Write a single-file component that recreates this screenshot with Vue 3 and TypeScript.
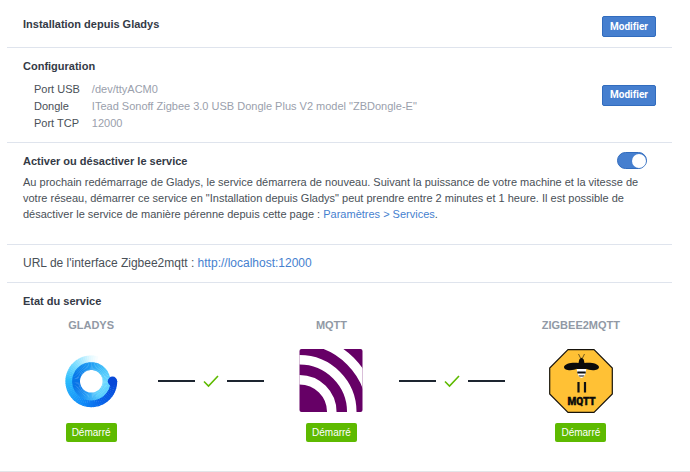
<script setup lang="ts">
import { ref } from 'vue'

interface Setting {
  label: string
  value: string
}

interface Segment {
  d: string
  color: string
}

type Rgb = [number, number, number]
type Stop = [number, Rgb]

const settings: Setting[] = [
  { label: 'Port USB', value: '/dev/ttyACM0' },
  { label: 'Dongle', value: 'ITead Sonoff Zigbee 3.0 USB Dongle Plus V2 model "ZBDongle-E"' },
  { label: 'Port TCP', value: '12000' },
]

const enabled = ref<boolean>(true)

// Splits a ring into short arcs so its colour can follow the angle.
function sweep(radius: number, stops: Stop[]): Segment[] {
  const center = 32.3
  const step = 5
  const last = stops[stops.length - 1][0]
  const point = (deg: number): string => {
    const a = (deg * Math.PI) / 180
    return `${(center + radius * Math.cos(a)).toFixed(2)} ${(center + radius * Math.sin(a)).toFixed(2)}`
  }
  const segments: Segment[] = []
  for (let a = stops[0][0]; a < last; a += step) {
    const i = Math.max(1, stops.findIndex(([s]) => s > a))
    const [a0, c0] = stops[i - 1]
    const [a1, c1] = stops[i]
    const t = (a - a0) / (a1 - a0)
    const rgb = c0.map((v, k) => Math.round(v + (c1[k] - v) * t))
    segments.push({ d: `M${point(a)}A${radius} ${radius} 0 0 1 ${point(a + step + 1)}`, color: `rgb(${rgb.join(',')})` })
  }
  return segments
}

const outerRing = sweep(21.2, [
  [0, [8, 72, 216]],
  [60, [8, 98, 232]],
  [110, [18, 140, 248]],
  [180, [44, 188, 252]],
  [225, [125, 222, 255]],
  [265, [225, 248, 255]],
  [285, [255, 255, 255]],
])

const innerRing = sweep(15.2, [
  [0, [108, 216, 255]],
  [60, [92, 208, 253]],
  [115, [32, 150, 245]],
  [160, [8, 115, 230]],
  [200, [8, 120, 232]],
  [270, [34, 160, 244]],
  [315, [72, 196, 250]],
  [360, [108, 216, 255]],
])
</script>

<template>
  <main class="page">
    <section class="row install">
      <h2>Installation depuis Gladys</h2>
      <button type="button" class="btn">Modifier</button>
    </section>

    <section class="row config">
      <div>
        <h2>Configuration</h2>
        <dl class="settings">
          <template v-for="s in settings" :key="s.label">
            <dt>{{ s.label }}</dt>
            <dd>{{ s.value }}</dd>
          </template>
        </dl>
      </div>
      <button type="button" class="btn">Modifier</button>
    </section>

    <section class="service">
      <div class="service-head">
        <h2><label for="service-toggle">Activer ou désactiver le service</label></h2>
        <input id="service-toggle" v-model="enabled" type="checkbox" role="switch" class="switch" />
      </div>
      <p>
        Au prochain redémarrage de Gladys, le service démarrera de nouveau. Suivant la puissance de votre machine et la
        vitesse de votre réseau, démarrer ce service en "Installation depuis Gladys" peut prendre entre 2 minutes et 1
        heure. Il est possible de désactiver le service de manière pérenne depuis cette page :
        <a href="#services">Paramètres &gt; Services</a>.
      </p>
    </section>

    <section class="url">
      URL de l'interface Zigbee2mqtt : <a href="http://localhost:12000">http://localhost:12000</a>
    </section>

    <section class="state">
      <h2>Etat du service</h2>
      <div class="chain">
        <div class="node">
          <h3>GLADYS</h3>
          <svg class="logo" viewBox="0 0 64 64" aria-hidden="true">
            <g fill="none">
              <path v-for="s in outerRing" :key="s.d" :d="s.d" :stroke="s.color" stroke-width="9.4" />
              <path v-for="s in innerRing" :key="s.d" :d="s.d" :stroke="s.color" stroke-width="7.8" />
            </g>
            <circle cx="53.500" cy="32.300" r="4.700" fill="#0848d8" />
          </svg>
          <span class="badge">Démarré</span>
        </div>

        <div class="link">
          <span class="line"></span>
          <svg class="check" viewBox="0 0 16 16" aria-hidden="true"><path d="M1 8.500 5.500 13 15 3" /></svg>
          <span class="line"></span>
        </div>

        <div class="node">
          <h3>MQTT</h3>
          <svg class="logo" viewBox="0 0 64 64" aria-hidden="true">
            <defs><clipPath id="m-clip"><rect x=".5" width="63" height="63" rx="2" /></clipPath></defs>
            <g clip-path="url(#m-clip)">
              <rect width="64" height="64" fill="#660066" />
              <g fill="none" stroke="#fff" stroke-width="9.500">
                <circle cx=".5" cy="63" r="32.300" />
                <circle cx=".5" cy="63" r="52.300" />
                <circle cx=".5" cy="63" r="72" />
              </g>
            </g>
          </svg>
          <span class="badge">Démarré</span>
        </div>

        <div class="link">
          <span class="line"></span>
          <svg class="check" viewBox="0 0 16 16" aria-hidden="true"><path d="M1 8.500 5.500 13 15 3" /></svg>
          <span class="line"></span>
        </div>

        <div class="node">
          <h3>ZIGBEE2MQTT</h3>
          <svg class="logo" viewBox="0 0 64 64" aria-hidden="true">
            <path d="M19 .7H45L63.300 19V45L45 63.300H19L.7 45V19Z" fill="#ffc135" stroke="#17130b" stroke-width="1.200" />
            <path d="M29.500 5l2 4M35.500 5l-2 4" fill="none" stroke="#111" stroke-width=".6" />
            <path d="M30.300 10.500q2.200-3.500 4.400 0l.8 3.500c5-1 14 0 14.500 4 0 4-9 4-13.500 1.500h-8c-4.500 2.500-13.500 2.500-13.500-1.500 .5-4 9.500-5 14.500-4Z" fill="#0b0b0b" />
            <path d="M28 18h9v4.500q-1 5.500-4.500 6.500Q29 28 28 22.500Z" fill="#fff" />
            <path d="M28 17.500h9v2.500h-9zM28.300 22.500h8.400v2h-8.400zM29.500 26.500h6l-1 1h-4z" fill="#0b0b0b" />
            <path d="M29.500 33v10.500M36 33v10.500" stroke="#111" stroke-width="2.200" />
            <text x="32.500" y="56" class="logo-text">MQTT</text>
          </svg>
          <span class="badge">Démarré</span>
        </div>
      </div>
    </section>
  </main>
</template>

<style>
body {
  margin: 0;
  background: #fff;
}
</style>

<style scoped>
.page {
  border-bottom: 1px solid #e3e5e9;
  font: 11px/16px "Liberation Sans", Arial, sans-serif;
  color: #495057;
}

section {
  margin: 0 18px 0 7px;
  padding: 0 16px;
  border-bottom: 1px solid #dfe4ed;
}

section.state {
  border-bottom: 0;
}

h2 {
  margin: 0;
  font-size: 11px;
  line-height: 16px;
  font-weight: 700;
  color: #343a46;
}

a {
  color: #467fcf;
  text-decoration: none;
}

.row {
  display: flex;
  align-items: center;
  justify-content: space-between;
}

.install {
  padding-top: 16px;
  padding-bottom: 10px;
}

.install h2 {
  align-self: flex-start;
}

.config {
  padding-top: 10px;
  padding-bottom: 10px;
}

.btn {
  box-sizing: border-box;
  height: 21px;
  padding: 0 7px;
  border: 1px solid #316cbe;
  border-radius: 2px;
  background: #467fcf;
  color: #fff;
  font: 700 10px/16px Roboto, sans-serif;
  font-variant-ligatures: none;
}

.settings {
  display: grid;
  grid-template-columns: auto 1fr;
  column-gap: 12px;
  margin: 7px 0 0;
  padding-left: 11px;
  line-height: 17px;
}

.settings dd {
  margin: 0;
  color: #9aa0ac;
}

.service {
  padding-top: 9px;
  padding-bottom: 22px;
}

.service-head {
  display: flex;
  align-items: center;
  justify-content: space-between;
  padding-right: 9px;
}

.service p {
  margin: 5px 12px 0 0;
}

.switch {
  display: flex;
  align-items: center;
  justify-content: flex-end;
  box-sizing: border-box;
  width: 30px;
  height: 17px;
  margin: 0;
  border: 1px solid #316cbe;
  border-radius: 9px;
  background: #467fcf;
  appearance: none;
}

.switch::before {
  content: "";
  width: 14px;
  height: 14px;
  border-radius: 50%;
  background: #fff;
}

.switch:not(:checked) {
  justify-content: flex-start;
  background: #ced4da;
}

.url {
  padding-top: 10px;
  padding-bottom: 10px;
  font-size: 12px;
  line-height: 17px;
}

.state {
  padding-top: 10px;
  padding-bottom: 29px;
}

.chain {
  display: grid;
  grid-template-columns: 20fr 20fr 20fr 20fr 23fr;
  margin-top: 8px;
  padding: 0 6px 0 8px;
}

.node {
  display: flex;
  flex-direction: column;
  align-items: center;
}

h3 {
  margin: 0 0 16px;
  font-size: 11px;
  line-height: 16px;
  font-weight: 700;
  color: #9199a5;
}

.logo {
  width: 64px;
  height: 64px;
}

.logo-text {
  font: 900 10px Roboto, sans-serif;
  text-anchor: middle;
  fill: #0b0b0b;
  stroke: #0b0b0b;
  stroke-width: 0.4;
}

.badge {
  margin-top: 10px;
  padding: 0 6px;
  border-radius: 2px;
  background: #5eba00;
  color: #fff;
  font-size: 10px;
  line-height: 19px;
}

.link {
  display: flex;
  align-items: center;
  align-self: start;
  justify-content: space-between;
  height: 64px;
  margin-top: 32px;
  padding: 0 7px;
}

.line {
  width: 37px;
  height: 2px;
  background: #1d2530;
}

.check {
  width: 16px;
  height: 16px;
  fill: none;
  stroke: #5eba00;
  stroke-width: 1.6;
}
</style>
